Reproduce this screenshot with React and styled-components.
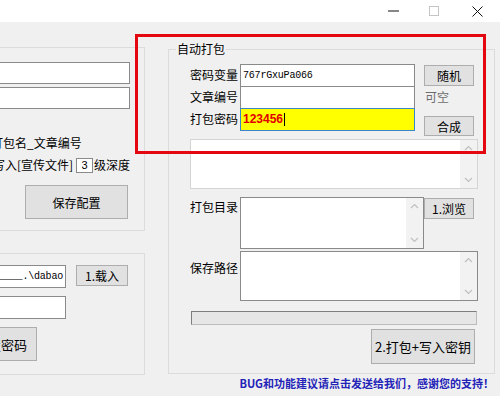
import React from 'react';
import styled, { createGlobalStyle } from 'styled-components';

const GlobalStyle = createGlobalStyle`
  html, body {
    margin: 0;
    padding: 0;
    background: #f0f0f0;
  }
  body {
    font-family: "Noto Sans CJK SC", "Microsoft YaHei", sans-serif;
    font-size: 12px;
    color: #000;
    overflow: hidden;
  }
  * { box-sizing: border-box; }
`;

const Window = styled.div`
  width: 500px;
  height: 396px;
  display: flex;
  flex-direction: column;
  overflow: hidden;
  background: #f0f0f0;
`;

const TitleBar = styled.div`
  height: 22px;
  flex: none;
  background: #fff;
  display: flex;
  justify-content: flex-end;
`;

const Ctrl = styled.div`
  width: ${(p) => p.$w}px;
  display: flex;
  align-items: center;
  justify-content: center;
`;

const Body = styled.div`
  position: relative;
  flex: 1;
  display: flex;
  flex-direction: column;
`;

const Columns = styled.div`
  display: flex;
  align-items: flex-start;
  height: 352px;
`;

const LeftCol = styled.div`
  margin-left: -40px;
  width: 185px;
  flex: none;
  display: flex;
  flex-direction: column;
`;

const Group = styled.div`
  position: relative;
  flex: none;
  border: 1px solid #dcdcdc;
  margin-top: ${(p) => p.$top}px;
  height: ${(p) => p.$h}px;
  padding: ${(p) => p.$pad};
  display: flex;
  flex-direction: column;
`;

const RightGroup = styled(Group)`
  margin-left: 23px;
  width: 327px;
`;

const Legend = styled.span`
  position: absolute;
  top: -9px;
  left: 7px;
  padding: 0 1px;
  line-height: 16px;
  background: #f0f0f0;
`;

const Field = styled.div`
  height: ${(p) => p.$h || 22}px;
  width: ${(p) => (p.$w ? `${p.$w}px` : 'auto')};
  margin-top: ${(p) => p.$mt || 0}px;
  background: ${(p) => (p.$focus ? '#ffff00' : '#fff')};
  border: 1px solid ${(p) => (p.$focus ? '#3a86c8' : '#8a8a8a')};
  display: flex;
  align-items: center;
  justify-content: ${(p) => (p.$end ? 'flex-end' : 'flex-start')};
  padding: 0 2px;
  overflow: hidden;
  white-space: nowrap;
  position: relative;
  z-index: ${(p) => (p.$focus ? 1 : 0)};
`;

const MonoText = styled.span`
  font-family: "Liberation Mono", "DejaVu Sans Mono", monospace;
  font-size: 10px;
  letter-spacing: -0.2px;
  color: #000;
`;

const PassText = styled.span`
  font-family: "Liberation Sans", Arial, sans-serif;
  font-weight: bold;
  font-size: 12px;
  color: #e00000;
`;

const Caret = styled.span`
  display: inline-block;
  width: 1px;
  height: 13px;
  background: #000;
  margin-left: 1px;
`;

const Line = styled.div`
  display: flex;
  align-items: center;
  height: 16px;
  line-height: 16px;
  margin-top: ${(p) => p.$mt || 0}px;
  margin-left: ${(p) => p.$ml || 0}px;
  white-space: nowrap;
`;

const NumBox = styled.span`
  width: 18px;
  height: 15px;
  margin: 0 1px 0 3px;
  background: #fff;
  border: 1px solid #8a8a8a;
  display: inline-flex;
  align-items: center;
  justify-content: center;
  font-family: "Liberation Sans", Arial, sans-serif;
  font-size: 11px;
`;

const Button = styled.div`
  flex: none;
  width: ${(p) => p.$w}px;
  height: ${(p) => p.$h}px;
  margin-top: ${(p) => p.$mt || 0}px;
  margin-right: ${(p) => p.$mr || 0}px;
  margin-left: ${(p) => p.$ml || 0}px;
  align-self: ${(p) => p.$self || 'auto'};
  justify-self: start;
  background: #e1e1e1;
  border: 1px solid #adadad;
  display: flex;
  align-items: center;
  justify-content: center;
  font-size: ${(p) => p.$fs || 12}px;
  white-space: nowrap;
  overflow: hidden;
`;

const LoadGrid = styled.div`
  display: grid;
  grid-template-columns: 1fr 52px;
  column-gap: 10px;
  row-gap: 8px;
  align-items: start;
`;

const FormGrid = styled.div`
  display: grid;
  grid-template-columns: 50px 184px 54px;
  grid-template-rows: repeat(3, 22px);
  align-items: center;
`;

const PathGrid = styled.div`
  display: grid;
  grid-template-columns: 50px 184px 54px;
  grid-template-rows: 52px 50px;
  row-gap: 2px;
  margin-top: 8px;
  align-items: start;
`;

const Label = styled.div`
  text-align: right;
  padding-right: 4px;
  line-height: 16px;
  white-space: nowrap;
  margin-top: ${(p) => p.$mt || 0}px;
`;

const Hint = styled.div`
  color: #6d6d6d;
  padding-left: 1px;
  line-height: 16px;
`;

const Memo = styled.div`
  grid-column: ${(p) => p.$span || 'auto'};
  height: ${(p) => p.$h}px;
  margin-top: ${(p) => p.$mt || 0}px;
  background: #fff;
  border: 1px solid ${(p) => (p.$light ? '#d4d4d4' : '#8a8a8a')};
  display: flex;
  justify-content: flex-end;
`;

const Track = styled.div`
  width: 17px;
  background: #f2f2f2;
  display: flex;
  flex-direction: column;
  justify-content: space-between;
  align-items: center;
  padding: 5px 0;
`;

const Progress = styled.div`
  margin-top: 10px;
  margin-left: 1px;
  width: 286px;
  height: 14px;
  background: #e6e6e6;
  border: 1px solid #bcbcbc;
  border-top-color: #7e7e7e;
  border-left-color: #7e7e7e;
`;

const Footer = styled.div`
  margin-top: 2px;
  padding-right: 6px;
  text-align: right;
  line-height: 14px;
  font-size: 11px;
  font-weight: bold;
  color: #2323b8;
  white-space: nowrap;
`;

const Highlight = styled.div`
  position: absolute;
  left: 135px;
  top: 12px;
  width: 351px;
  height: 120px;
  border: 3px solid #e4070f;
  pointer-events: none;
`;

const Chevron = ({ up }) => (
  <svg width="9" height="6" viewBox="0 0 9 6">
    <path
      d={up ? 'M1 5 L4.5 1.5 L8 5' : 'M1 1 L4.5 4.5 L8 1'}
      fill="none"
      stroke="#c0c0c0"
      strokeWidth="1.2"
    />
  </svg>
);

const ScrollTrack = () => (
  <Track>
    <Chevron up />
    <Chevron />
  </Track>
);

export default function App() {
  return (
    <Window>
      <GlobalStyle />
      <TitleBar>
        <Ctrl $w={42}>
          <svg width="11" height="2"><rect y="0.5" width="11" height="1" fill="#111" /></svg>
        </Ctrl>
        <Ctrl $w={40}>
          <svg width="10" height="10"><rect x="0.5" y="0.5" width="9" height="9" fill="none" stroke="#c4c4c4" /></svg>
        </Ctrl>
        <Ctrl $w={46}>
          <svg width="11" height="11"><path d="M0.5 0.5 L10.5 10.5 M10.5 0.5 L0.5 10.5" stroke="#111" strokeWidth="1" /></svg>
        </Ctrl>
      </TitleBar>

      <Body>
        <Columns>
          <LeftCol>
            <Group $top={25} $h={184} $pad="14px 14px 0 32px">
              <Field />
              <Field $mt={3} />
              <Line $mt={26} $ml={-2}>打包名_文章编号</Line>
              <Line $mt={6}>
                写入[宣传文件]
                <NumBox>3</NumBox>
                级深度
              </Line>
              <Button $w={103} $h={34} $mt={12} $mr={2} $self="flex-end">保存配置</Button>
            </Group>
            <Group $top={22} $h={122} $pad="11px 16px 0 4px">
              <LoadGrid>
                <Field $h={23} $end>
                  <MonoText>C:\Users\........_____.\dabao</MonoText>
                </Field>
                <Button $w={52} $h={21}>1.载入</Button>
                <Field $h={23} />
              </LoadGrid>
              <Button $w={72} $h={34} $mt={8} $fs={13}>设置密码</Button>
            </Group>
          </LeftCol>

          <RightGroup $top={27} $h={325} $pad="14px 16px 0 21px">
            <Legend>自动打包</Legend>
            <FormGrid>
              <Label>密码变量</Label>
              <Field $h={23} $w={175}>
                <MonoText>767rGxuPa066</MonoText>
              </Field>
              <Button $w={50} $h={21}>随机</Button>

              <Label>文章编号</Label>
              <Field $h={23} $w={175} />
              <Hint>可空</Hint>

              <Label>打包密码</Label>
              <Field $h={23} $w={175} $focus>
                <PassText>123456</PassText>
                <Caret />
              </Field>
              <Button $w={50} $h={20} $self="start" $mt={8}>合成</Button>
            </FormGrid>

            <Memo $h={50} $mt={9} $light>
              <ScrollTrack />
            </Memo>

            <PathGrid>
              <Label $mt={2}>打包目录</Label>
              <Memo $h={52}>
                <ScrollTrack />
              </Memo>
              <Button $w={50} $h={21} $mt={1}>1.浏览</Button>

              <Label $mt={9}>保存路径</Label>
              <Memo $h={50} $span="2 / 4">
                <ScrollTrack />
              </Memo>
            </PathGrid>

            <Progress />
            <Button $w={104} $h={35} $mt={4} $mr={3} $self="flex-end" $fs={13}>
              2.打包+写入密钥
            </Button>
          </RightGroup>
        </Columns>

        <Footer>BUG和功能建议请点击发送给我们，感谢您的支持！</Footer>
        <Highlight />
      </Body>
    </Window>
  );
}
